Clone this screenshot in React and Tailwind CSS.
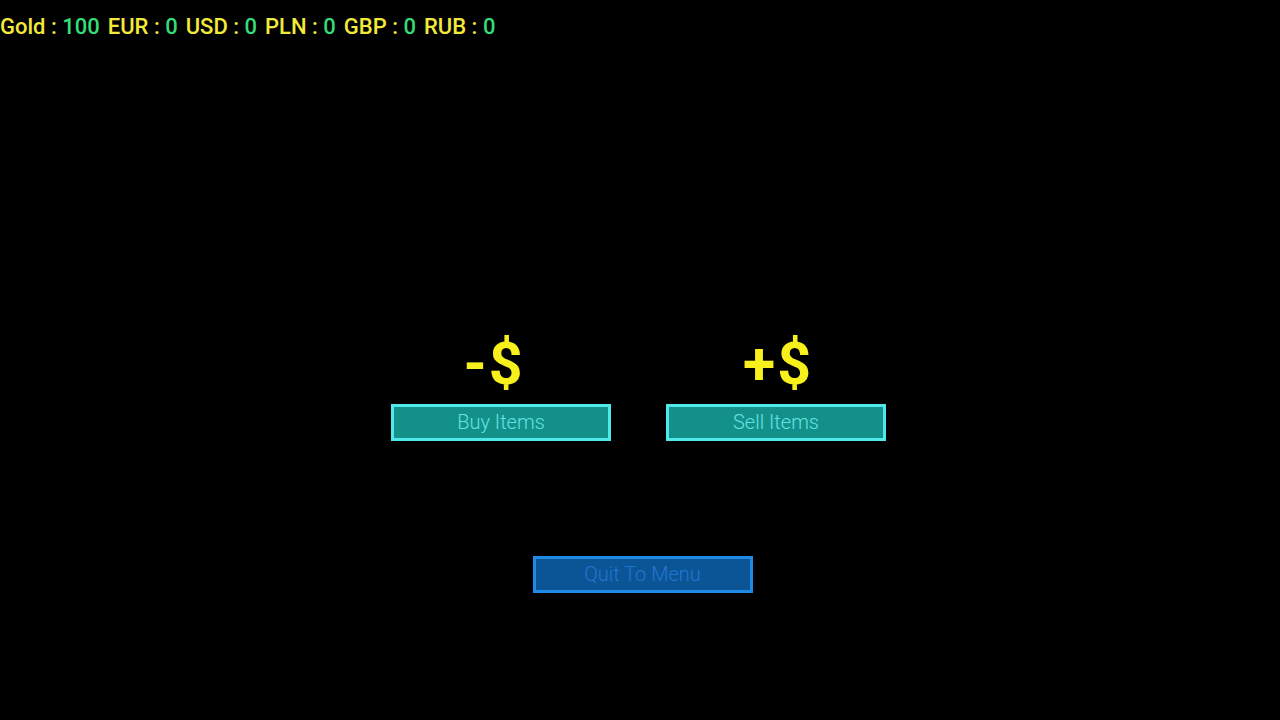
import React from 'react';

const balances = [
  { label: 'Gold', value: 100 },
  { label: 'EUR', value: 0 },
  { label: 'USD', value: 0 },
  { label: 'PLN', value: 0 },
  { label: 'GBP', value: 0 },
  { label: 'RUB', value: 0 },
];

const ShopColumn = ({ sign, label, signClass }) => (
  <div className="flex flex-col items-center w-[220px]">
    <div className={`text-[59px] leading-none font-bold text-[#f8f01c] h-[58px] flex items-end tracking-[2px] ${signClass}`}>{sign}</div>
    <button className="mt-[11px] w-[220px] h-[37px] border-[3px] border-[#4fe9e9] bg-[#14908b] text-[#62e3e0] text-[20px] font-light leading-none pb-[1px]">
      {label}
    </button>
  </div>
);

export default function App() {
  return (
    <div className="w-[1280px] h-[720px] bg-black flex flex-col" style={{ fontFamily: 'Roboto, sans-serif' }}>
      <div className="pt-[14px] pl-0 text-[22px] leading-[26px] font-medium flex gap-[8px]">
        {balances.map((b) => (
          <span key={b.label}>
            <span className="text-[#f3e93a]">{b.label} : </span>
            <span className="text-[#33dd77]">{b.value}</span>
          </span>
        ))}
      </div>

      <div className="flex justify-center gap-[55px] mt-[295px] -ml-[3px]">
        <ShopColumn sign="-$" label="Buy Items" signClass="mr-[14px]" />
        <ShopColumn sign="+$" label="Sell Items" signClass="ml-[4px]" />
      </div>

      <div className="flex justify-center mt-[115px] ml-[5px]">
        <button className="w-[220px] h-[37px] border-[3px] border-[#1e8ae6] bg-[#0b5596] text-[#2176d0] text-[20px] font-light leading-none pb-[1px]">
          Quit To Menu
        </button>
      </div>
    </div>
  );
}
